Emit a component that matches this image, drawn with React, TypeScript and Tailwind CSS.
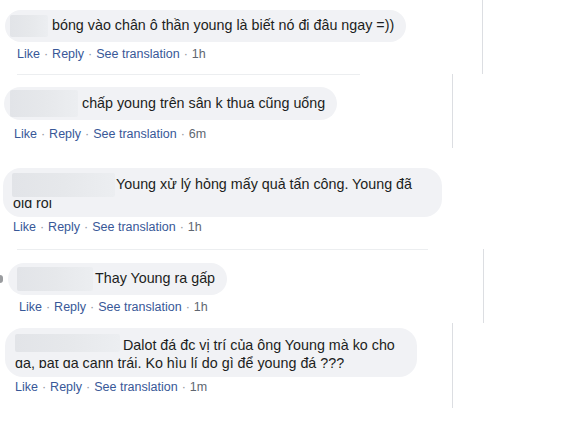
import React from 'react';

const Blur = ({ className }: { className: string }) => (
  <div className={`shrink-0 rounded-[2px] bg-gradient-to-r from-[#e2e4e8] via-[#e6e8eb] to-[#eceef1] ${className}`} />
);

const Dot = () => <span className="mx-[4px] text-[#90949c]">·</span>;

const Actions = ({ time, className }: { time: string; className: string }) => (
  <div className={`flex items-center text-[12.5px] leading-[16px] text-[#385898] ${className}`}>
    <span>Like</span>
    <Dot />
    <span>Reply</span>
    <Dot />
    <span>See translation</span>
    <Dot />
    <span className="text-[#606770]">{time}</span>
  </div>
);

export default function App() {
  return (
    <div className="w-[586px] h-[426px] overflow-hidden bg-white font-['Liberation_Sans',Arial,sans-serif] text-[14.3px] text-[#1c1e21]">
      {/* shot 1 */}
      <div className="h-[74px] w-[483px] border-r border-[#dcdee2] pl-[5px] pt-[10px]">
        <div className="inline-flex h-[32px] items-center rounded-[16px] bg-[#f1f2f5] pl-[5px] pr-[12px]">
          <Blur className="w-[38px] h-[22px]" />
          <span className="ml-[4px] whitespace-nowrap">bóng vào chân ô thần young là biết nó đi đâu ngay =))</span>
        </div>
        <Actions time="1h" className="ml-[12px] mt-[3px]" />
      </div>

      {/* shot 2 */}
      <div className="h-[74px] w-[453px] border-r border-[#dcdee2]">
        <div className="ml-[17px] h-px w-[343px] bg-[#eceef0]" />
        <div className="pl-[4px] pt-[12px]">
          <div className="inline-flex h-[33px] items-center rounded-[17px] bg-[#f1f2f5] pl-[6px] pr-[12px]">
            <Blur className="w-[68px] h-[27px]" />
            <span className="ml-[4px] whitespace-nowrap">chấp young trên sân k thua cũng uổng</span>
          </div>
          <Actions time="6m" className="ml-[10px] mt-[3px]" />
        </div>
      </div>

      {/* shot 3 */}
      <div className="h-[101px] pl-[3px] pt-[20px]">
        <div className="w-[439px] rounded-[18px] bg-[#f1f2f5] pl-[9px] pt-[5px] pb-[5px]">
          <div className="flex h-[24px] items-center">
            <Blur className="w-[103px] h-[24px]" />
            <span className="ml-[1px] whitespace-nowrap">Young xử lý hỏng mấy quả tấn công. Young đã</span>
          </div>
          <div className="ml-[1px] mt-[3px] flex h-[12px] items-end overflow-hidden">
            <span className="leading-[17px]">old roi</span>
          </div>
        </div>
        <Actions time="1h" className="ml-[10px] mt-[2px]" />
      </div>

      {/* shot 4 */}
      <div className="h-[74px] w-[484px] border-r border-[#dcdee2]">
        <div className="ml-[17px] h-px w-[411px] bg-[#eceef0]" />
        <div className="flex items-center pt-[13px]">
          <div className="h-[8px] w-[3px] rounded-r-full bg-[#9a9c9f]" />
          <div className="ml-[5px] inline-flex h-[32px] items-center rounded-[16px] bg-[#f1f2f5] pl-[9px] pr-[12px]">
            <Blur className="w-[76px] h-[24px]" />
            <span className="ml-[2px] whitespace-nowrap">Thay Young ra gấp</span>
          </div>
        </div>
        <Actions time="1h" className="ml-[19px] mt-[4px]" />
      </div>

      {/* shot 5 */}
      <div className="h-[85px] w-[453px] border-r border-[#dcdee2] pl-[5px] pt-[5px]">
        <div className="w-[412px] rounded-[18px] bg-[#f1f2f5] pl-[10px] pt-[6px] pb-[5px]">
          <div className="flex items-start">
            <Blur className="w-[105px] h-[18px]" />
            <span className="ml-[3px] mt-[2px] whitespace-nowrap leading-[18px]">Dalot đá đc vị trí của ông Young mà ko cho</span>
          </div>
          <div className="mt-[1px] flex items-end whitespace-nowrap">
            <div className="flex h-[12px] items-end overflow-hidden">
              <span className="leading-[17px]">đá, bắt đá cánh</span>
            </div>
            <span className="pl-[4px] leading-[17px]">trái. Ko hìu lí do gì để young đá ???</span>
          </div>
        </div>
        <Actions time="1m" className="ml-[10px] mt-[2px]" />
      </div>
    </div>
  );
}
